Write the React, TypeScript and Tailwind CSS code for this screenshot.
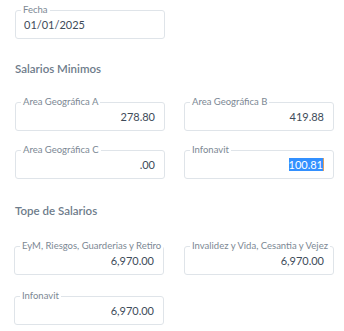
import type { ReactNode } from 'react';

function Field({ label, children, align = 'right' }: { label: string; children: ReactNode; align?: 'left' | 'right' }) {
  return (
    <fieldset className="w-[150px] border border-[#dfe4e9] rounded-[3px] pl-[5px] pr-[9px] pb-[5px] m-0 min-w-0">
      <legend className="px-[2px] text-[9.5px] leading-[12px] whitespace-nowrap text-[#7c8894]">{label}</legend>
      <div className={`text-[11px] leading-[16px] pt-[1px] text-[#3e4b59] ${align === 'right' ? 'text-right' : 'text-left pl-[3px]'}`}>
        {children}
      </div>
    </fieldset>
  );
}

export default function App() {
  return (
    <div className="w-[344px] h-[331px] bg-white pl-[15px] pt-[4px]" style={{ fontFamily: 'Lato, sans-serif' }}>
      <Field label="Fecha" align="left">01/01/2025</Field>

      <h2 className="mt-[23px] text-[11.5px] leading-[14px] font-semibold text-[#6e7c8b]">Salarios Minimos</h2>

      <div className="grid grid-cols-[150px_150px] gap-x-[19px] gap-y-[13px] mt-[20px]">
        <Field label="Area Geográfica A">278.80</Field>
        <Field label="Area Geográfica B">419.88</Field>
        <Field label="Area Geográfica C">.00</Field>
        <Field label="Infonavit">
          <span className="bg-[#3390ff] text-white border-r border-[#e0a060]">100.81</span>
        </Field>
      </div>

      <h2 className="mt-[25px] text-[11.5px] leading-[14px] font-semibold text-[#6e7c8b]">Tope de Salarios</h2>

      <div className="grid grid-cols-[150px_150px] gap-x-[20px] gap-y-[15px] mt-[22px] -ml-[1px]">
        <Field label="EyM, Riesgos, Guarderias y Retiro">6,970.00</Field>
        <Field label="Invalidez y Vida, Cesantia y Vejez">6,970.00</Field>
        <Field label="Infonavit">6,970.00</Field>
      </div>
    </div>
  );
}
